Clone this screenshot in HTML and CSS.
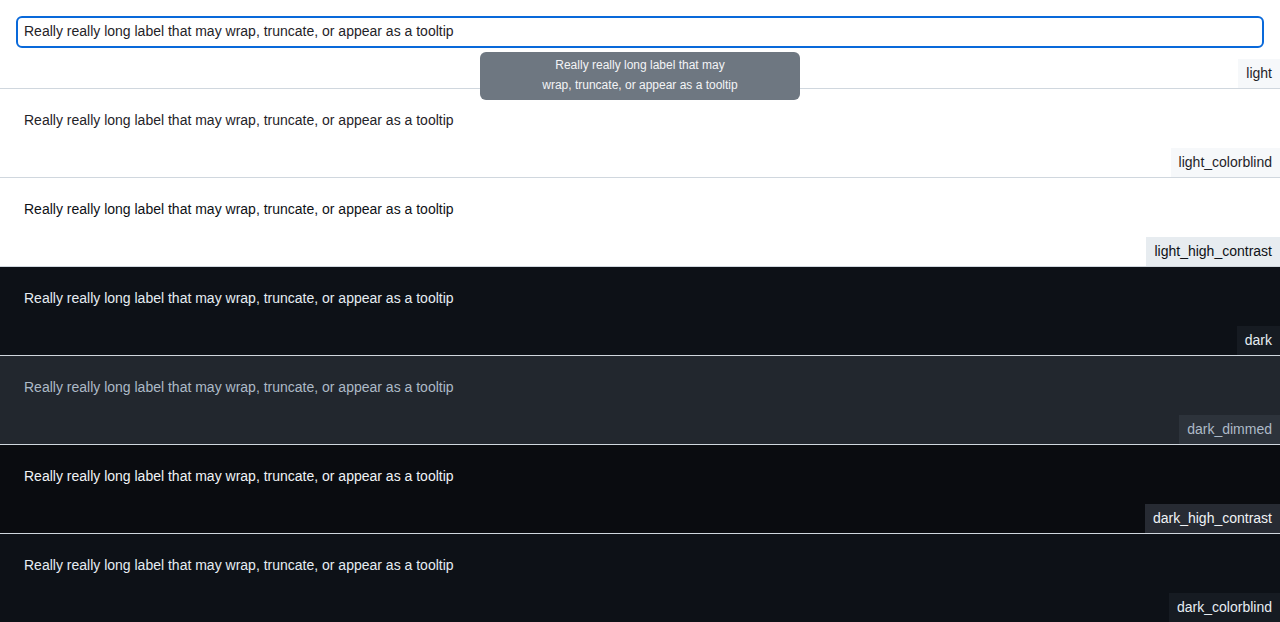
FILE: index.html
```html
<!DOCTYPE html>
<html>
<head>
<meta charset="utf-8">
<link rel="stylesheet" href="styles.css">
</head>
<body>
<div class="theme t-light">
  <div class="item focused">Really really long label that may wrap, truncate, or appear as a tooltip</div>
  <div class="tooltip">Really really long label that may<br>wrap, truncate, or appear as a tooltip</div>
  <span class="badge">light</span>
</div>
<div class="theme t-light-cb">
  <div class="item">Really really long label that may wrap, truncate, or appear as a tooltip</div>
  <span class="badge">light_colorblind</span>
</div>
<div class="theme t-light-hc">
  <div class="item">Really really long label that may wrap, truncate, or appear as a tooltip</div>
  <span class="badge">light_high_contrast</span>
</div>
<div class="theme t-dark">
  <div class="item">Really really long label that may wrap, truncate, or appear as a tooltip</div>
  <span class="badge">dark</span>
</div>
<div class="theme t-dark-dimmed">
  <div class="item">Really really long label that may wrap, truncate, or appear as a tooltip</div>
  <span class="badge">dark_dimmed</span>
</div>
<div class="theme t-dark-hc">
  <div class="item">Really really long label that may wrap, truncate, or appear as a tooltip</div>
  <span class="badge">dark_high_contrast</span>
</div>
<div class="theme t-dark-cb">
  <div class="item">Really really long label that may wrap, truncate, or appear as a tooltip</div>
  <span class="badge">dark_colorblind</span>
</div>
</body>
</html>
```

FILE: styles.css
```css
html, body {
  margin: 0;
  padding: 0;
}
body {
  font-family: "Liberation Sans", Arial, sans-serif;
  font-size: 14px;
  line-height: 1.5;
  background: #ffffff;
  overflow: hidden;
}
.theme {
  position: relative;
  height: 89px;
  box-sizing: border-box;
  padding: 16px;
  border-bottom: 1px solid #d0d7de;
}
.item {
  height: 32px;
  box-sizing: border-box;
  border: 2px solid transparent;
  border-radius: 6px;
  padding: 0 6px 2px;
  line-height: 26px;
  white-space: nowrap;
}
.item.focused {
  border-color: #0969da;
}
.badge {
  position: absolute;
  right: 0;
  bottom: 0;
  padding: 4px 8px;
  line-height: 21px;
  font-size: 14px;
}
.tooltip {
  position: absolute;
  z-index: 5;
  left: 480px;
  top: 52px;
  width: 320px;
  box-sizing: border-box;
  padding: 3px 8px 5px;
  background: #6e7781;
  color: #f3f4f6;
  font-size: 12px;
  line-height: 20px;
  text-align: center;
  border-radius: 6px;
}
.t-light { background: #ffffff; color: #1f2328; }
.t-light .badge { background: #f6f8fa; color: #1f2328; }
.t-light-cb { background: #ffffff; color: #1f2328; }
.t-light-cb .badge { background: #f6f8fa; color: #1f2328; }
.t-light-hc { background: #ffffff; color: #0e1116; }
.t-light-hc .badge { background: #e7ecf0; color: #0e1116; }
.t-dark { background: #0d1117; color: #e6edf3; }
.t-dark .badge { background: #161b22; color: #e6edf3; }
.t-dark-dimmed { background: #22272e; color: #adbac7; }
.t-dark-dimmed .badge { background: #2d333b; color: #adbac7; }
.t-dark-hc { background: #0a0c10; color: #f0f3f6; }
.t-dark-hc .badge { background: #272b33; color: #f0f3f6; }
.t-dark-cb { background: #0d1117; color: #e6edf3; }
.t-dark-cb .badge { background: #161b22; color: #e6edf3; }
```
